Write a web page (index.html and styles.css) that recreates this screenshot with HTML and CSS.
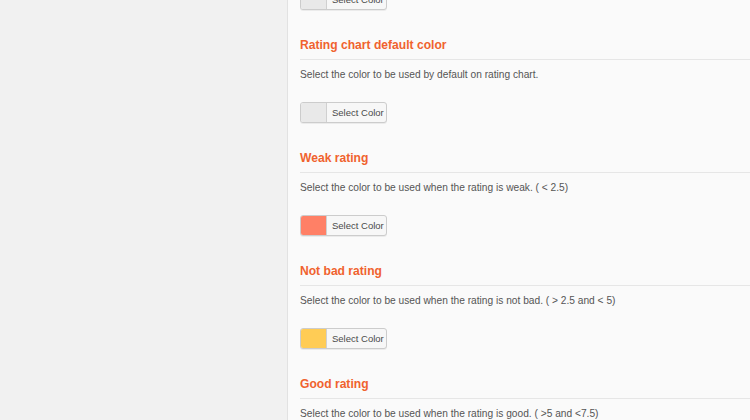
FILE: index.html
```html
<!DOCTYPE html>
<html>
<head>
<meta charset="utf-8">
<link rel="stylesheet" href="styles.css">
</head>
<body>
<div class="layout">
  <aside class="sidebar"></aside>
  <main class="main">
    <div class="picker picker-first">
      <span class="swatch swatch-default"></span>
      <span class="picker-label">Select Color</span>
    </div>

    <section class="setting">
      <h3 class="setting-title">Rating chart default color</h3>
      <p class="setting-desc">Select the color to be used by default on rating chart.</p>
      <div class="picker">
        <span class="swatch swatch-default"></span>
        <span class="picker-label">Select Color</span>
      </div>
    </section>

    <section class="setting">
      <h3 class="setting-title">Weak rating</h3>
      <p class="setting-desc">Select the color to be used when the rating is weak. ( &lt; 2.5)</p>
      <div class="picker">
        <span class="swatch swatch-weak"></span>
        <span class="picker-label">Select Color</span>
      </div>
    </section>

    <section class="setting">
      <h3 class="setting-title">Not bad rating</h3>
      <p class="setting-desc">Select the color to be used when the rating is not bad. ( &gt; 2.5 and &lt; 5)</p>
      <div class="picker">
        <span class="swatch swatch-notbad"></span>
        <span class="picker-label">Select Color</span>
      </div>
    </section>

    <section class="setting">
      <h3 class="setting-title">Good rating</h3>
      <p class="setting-desc">Select the color to be used when the rating is good. ( &gt;5 and &lt;7.5)</p>
      <div class="picker">
        <span class="swatch swatch-good"></span>
        <span class="picker-label">Select Color</span>
      </div>
    </section>
  </main>
</div>
</body>
</html>
```

FILE: styles.css
```css
html, body {
  margin: 0;
  padding: 0;
  height: 100%;
  overflow: hidden;
}

body {
  font-family: "Liberation Sans", Arial, sans-serif;
  background: #fafafa;
}

.layout {
  display: flex;
  height: 420px;
}

.sidebar {
  width: 287px;
  flex: none;
  background: #f1f1f1;
  border-right: 1px solid #e2e2e2;
}

.main {
  flex: 1;
  background: #fafafa;
  padding-left: 12px;
  overflow: hidden;
}

.picker {
  display: flex;
  align-items: stretch;
  width: 85px;
  height: 19px;
  border: 1px solid #cccccc;
  border-radius: 3px;
  background: #f7f7f7;
  box-shadow: 0 1px 0 rgba(0, 0, 0, 0.06);
  overflow: hidden;
}

.picker-first {
  margin-top: -11px;
}

.swatch {
  width: 25px;
  flex: none;
  border-right: 1px solid #d0d0d0;
}

.swatch-default { background: #e9e9e9; }
.swatch-weak { background: #ff8066; }
.swatch-notbad { background: #ffcc55; }
.swatch-good { background: #7ad03a; }

.picker-label {
  padding-left: 5px;
  font-size: 9.5px;
  line-height: 19px;
  color: #4a4a4a;
  white-space: nowrap;
}

.setting {
  margin-top: 27px;
}

.setting-title {
  margin: 0;
  font-size: 12.1px;
  font-weight: bold;
  line-height: 16px;
  color: #f0622e;
  padding-bottom: 6px;
  border-bottom: 1px solid #e6e6e6;
}

.setting-desc {
  margin: 7px 0 19px;
  font-size: 10.2px;
  line-height: 16px;
  color: #555555;
}
```
